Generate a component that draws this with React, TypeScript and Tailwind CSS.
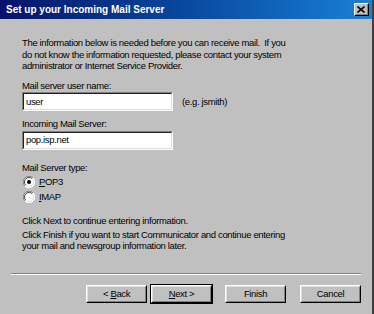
import type { ReactNode } from "react";

function Radio({ checked }: { checked?: boolean }) {
  return (
    <svg width="12" height="12" viewBox="0 0 12 12" className="shrink-0">
      <circle cx="6" cy="6" r="5.5" fill="#ffffff" />
      <path d="M1.9 10.1 A5.5 5.5 0 0 1 10.1 1.9" stroke="#808080" fill="none" />
      <path d="M10.1 1.9 A5.5 5.5 0 0 1 1.9 10.1" stroke="#ffffff" fill="none" />
      <path d="M2.8 9.2 A4.5 4.5 0 0 1 9.2 2.8" stroke="#404040" fill="none" />
      <path d="M9.2 2.8 A4.5 4.5 0 0 1 2.8 9.2" stroke="#dfdfdf" fill="none" />
      {checked && <circle cx="6" cy="6" r="2" fill="#000000" />}
    </svg>
  );
}

function Button({ children, primary }: { children: ReactNode; primary?: boolean }) {
  return (
    <div className={primary ? "border border-black" : "border border-transparent"}>
      <div className="border border-t-white border-l-white border-r-black border-b-black">
        <div className="flex h-[16px] w-[59px] items-center justify-center border border-t-[#dfdfdf] border-l-[#dfdfdf] border-r-[#808080] border-b-[#808080] bg-[#c0c0c0]">
          <span className="whitespace-pre">{children}</span>
        </div>
      </div>
    </div>
  );
}

function TextBox({ value }: { value: string }) {
  return (
    <div className="w-[151px] border border-t-[#808080] border-l-[#808080] border-r-white border-b-white">
      <div className="flex h-[17px] items-center border border-t-[#202020] border-l-[#202020] border-r-[#dfdfdf] border-b-[#dfdfdf] bg-white pl-[2px]">
        {value}
      </div>
    </div>
  );
}

export default function App() {
  return (
    <div className="flex h-[314px] w-[374px] flex-col overflow-hidden border-r-2 border-r-[#404040] bg-[#c0c0c0] font-['Liberation_Sans',Arial,sans-serif] text-[9.5px] leading-[11.5px] tracking-[-0.35px] text-black">
      <div className="flex h-[19px] shrink-0 items-center justify-between bg-gradient-to-r from-[#08106a] to-[#1a80d6] pl-[6px] pr-[3px]">
        <span className="text-[10px] font-bold tracking-normal text-white">Set up your Incoming Mail Server</span>
        <div className="border border-t-white border-l-white border-r-black border-b-black">
          <div className="flex h-[11px] w-[13px] items-center justify-center border-r border-b border-r-[#808080] border-b-[#808080] bg-[#c0c0c0]">
            <svg width="8" height="7" viewBox="0 0 8 7">
              <path d="M0.5 0.5 L7.5 6.5 M7.5 0.5 L0.5 6.5" stroke="#000" strokeWidth="1.6" />
            </svg>
          </div>
        </div>
      </div>

      <div className="flex flex-1 flex-col pl-[22px] pr-[12px]">
        <p className="mt-[18px]">
          The information below is needed before you can receive mail.&nbsp; If you
          <br />
          do not know the information requested, please contact your system
          <br />
          administrator or Internet Service Provider.
        </p>

        <p className="mt-[8px]">Mail server user name:</p>
        <div className="mt-[1px] flex items-center gap-[9px]">
          <TextBox value="user" />
          <span>(e.g. jsmith)</span>
        </div>

        <p className="mt-[7px]">Incoming Mail Server:</p>
        <div className="mt-[1px]">
          <TextBox value="pop.isp.net" />
        </div>

        <p className="mt-[12px]">Mail Server type:</p>
        <div className="mt-[3px] flex flex-col gap-[3px]">
          <label className="flex h-[12px] items-center gap-[4px] pl-[1px]">
            <Radio checked />
            <span>
              <span className="underline">P</span>OP3
            </span>
          </label>
          <label className="flex h-[12px] items-center gap-[4px] pl-[1px]">
            <Radio />
            <span>
              <span className="underline">I</span>MAP
            </span>
          </label>
        </div>

        <p className="mt-[12px]">Click Next to continue entering information.</p>
        <p className="mt-[2px]">
          Click Finish if you want to start Communicator and continue entering
          <br />
          your mail and newsgroup information later.
        </p>
      </div>

      <div className="mx-[11px] border-t border-b border-t-[#808080] border-b-white" />

      <div className="flex justify-end gap-[2px] pr-[10px] pt-[9px] pb-[10px]">
        <Button>
          &lt; <span className="underline">B</span>ack
        </Button>
        <Button primary>
          <span className="underline">N</span>ext &gt;
        </Button>
        <div className="w-[7px]" />
        <Button>Finish</Button>
        <div className="w-[8px]" />
        <Button>Cancel</Button>
      </div>
    </div>
  );
}
